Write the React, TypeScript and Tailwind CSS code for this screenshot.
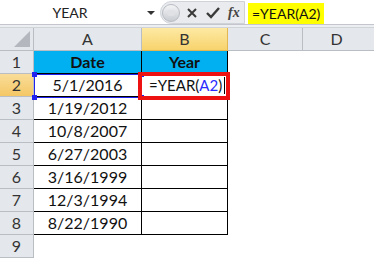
import React from "react";

const font = { fontFamily: "Lato, 'Open Sans', sans-serif" };

const rows = ["5/1/2016", "1/19/2012", "10/8/2007", "6/27/2003", "3/16/1999", "12/3/1994", "8/22/1990"];

function RowHdr({ n, active }: { n: number; active?: boolean }) {
  return (
    <div
      className={
        "w-[34px] shrink-0 h-full flex items-center justify-center border-r border-b border-[#b9bec5] text-[16px] text-[#333] " +
        (active ? "bg-gradient-to-b from-[#f9dd98] to-[#f4c765]" : "bg-[#e4e7eb]")
      }
    >
      {n}
    </div>
  );
}

export default function App() {
  return (
    <div className="w-[374px] h-[259px] overflow-hidden bg-white relative" style={font}>
      {/* formula bar */}
      <div className="h-[25px] flex border-b border-[#c3c7cd] bg-white">
        <div className="w-[160px] shrink-0 flex items-center relative">
          <span className="flex-1 text-center text-[14px] text-[#222] pr-[20px]">YEAR</span>
          <svg width="10" height="6" className="absolute right-[4px] top-[10px]" viewBox="0 0 10 6">
            <path d="M1 1 L9 1 L5 5 Z" fill="#333" />
          </svg>
        </div>
        <div className="w-[85px] shrink-0 flex items-center bg-[#e9ebee] rounded-l-[12px] border border-[#cfd3d8] mt-[1px] h-[23px]">
          <div className="w-[18px] h-[18px] ml-[1px] rounded-full bg-gradient-to-b from-[#f3f4f6] to-[#c9ccd1] border border-[#b8bcc2] flex items-center justify-center">
            <div className="w-[8px] h-[6px] rounded-full bg-[#dfe1e4]" />
          </div>
          <svg width="12" height="12" viewBox="0 0 12 12" className="ml-[6px]">
            <path d="M2 2 L10 10 M10 2 L2 10" stroke="#3a3a3a" strokeWidth="2" />
          </svg>
          <svg width="14" height="12" viewBox="0 0 14 12" className="ml-[8px]">
            <path d="M1 6 L5 10 L13 1" stroke="#3a3a3a" strokeWidth="2.4" fill="none" />
          </svg>
          <span
            className="ml-[8px] text-[14px] italic font-bold text-[#444] leading-none"
            style={{ fontFamily: "'Liberation Serif', serif" }}
          >
            fx
          </span>
        </div>
        <div className="flex-1 flex items-center pl-[3px] pt-[3px]">
          <span className="bg-[#ffff00] text-[14px] text-[#111] px-[4px] h-[21px] leading-[21px]">=YEAR(A2)</span>
        </div>
      </div>
      <div className="h-[3px] bg-[#eceef1] border-b border-[#d0d4d9]" />

      {/* column header */}
      <div className="flex h-[23px] text-[16px] text-[#333]">
        <div className="w-[34px] shrink-0 bg-[#e4e7eb] border-r border-b border-[#b9bec5] relative overflow-hidden">
          <svg width="16" height="16" viewBox="0 0 16 16" className="absolute right-[3px] bottom-[3px]">
            <path d="M16 0 L16 16 L0 16 Z" fill="#b4b8be" />
          </svg>
        </div>
        <div className="w-[108px] shrink-0 bg-[#e4e7eb] border-r border-b border-[#b9bec5] flex items-center justify-center">A</div>
        <div className="w-[86px] shrink-0 bg-gradient-to-b from-[#fde9a3] to-[#f8d36c] border-r border-b border-[#e2b653] flex items-center justify-center">B</div>
        <div className="w-[75px] shrink-0 bg-[#e4e7eb] border-r border-b border-[#b9bec5] flex items-center justify-center">C</div>
        <div className="flex-1 bg-[#e4e7eb] border-b border-[#b9bec5] flex items-center justify-center pr-[4px]">D</div>
      </div>

      {/* row 1 */}
      <div className="flex h-[23px] text-[16px] text-[#111]">
        <RowHdr n={1} />
        <div className="w-[108px] shrink-0 bg-[#00b0f0] border-r border-b border-black flex items-center justify-center font-bold">Date</div>
        <div className="w-[86px] shrink-0 bg-[#00b0f0] border-r border-b border-black flex items-center justify-center font-bold">Year</div>
      </div>

      {/* data rows */}
      {rows.map((d, i) => (
        <div key={d} className="flex h-[23px] text-[16px] text-[#111]">
          <RowHdr n={i + 2} active={i === 0} />
          <div className="w-[108px] shrink-0 border-r border-b border-black flex items-center justify-center">{d}</div>
          <div className="w-[86px] shrink-0 border-r border-b border-black flex items-center pl-[7px]">
            {i === 0 && (
              <span className="flex items-center text-[15px]">
                =YEAR(<span className="text-[#2b2bff]">A2</span>)
                <span className="inline-block w-[1px] h-[17px] bg-black ml-[2px]" />
              </span>
            )}
          </div>
        </div>
      ))}

      <div className="flex h-[23px] text-[16px]">
        <RowHdr n={9} />
      </div>

      {/* A2 reference highlight */}
      <div className="absolute left-[34px] top-[74px] w-[108px] h-[24px] border border-[#2222ee] pointer-events-none">
        <div className="absolute -left-[3px] -top-[3px] w-[5px] h-[5px] bg-[#2222ee]" />
        <div className="absolute -right-[3px] -top-[3px] w-[5px] h-[5px] bg-[#2222ee]" />
        <div className="absolute -left-[3px] -bottom-[3px] w-[5px] h-[5px] bg-[#2222ee]" />
        <div className="absolute -right-[3px] -bottom-[3px] w-[5px] h-[5px] bg-[#2222ee]" />
      </div>

      {/* red annotation box */}
      <div className="absolute left-[138px] top-[72px] w-[92px] h-[28px] border-[4px] border-[#ee1111] pointer-events-none" />
    </div>
  );
}
